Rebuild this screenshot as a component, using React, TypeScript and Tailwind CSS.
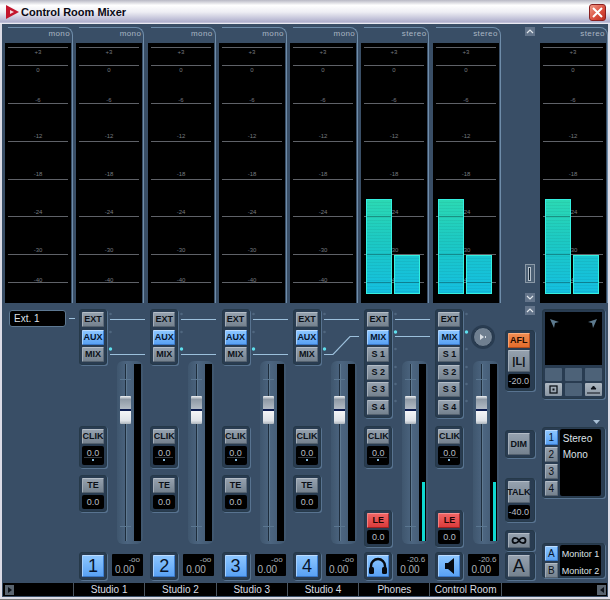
import type { ReactNode } from "react";

const scale = [
  { label: "+3", y: 4, ty: 11 },
  { label: "0", y: 22, ty: 29 },
  { label: "-6", y: 60, ty: 59 },
  { label: "-12", y: 98, ty: 95 },
  { label: "-18", y: 136, ty: 133 },
  { label: "-24", y: 173, ty: 171 },
  { label: "-30", y: 211, ty: 209 },
  { label: "-40", y: 239, ty: 239 },
];

const meters = [
  { kind: "mono" },
  { kind: "mono" },
  { kind: "mono" },
  { kind: "mono" },
  { kind: "mono" },
  { kind: "stereo", bars: true },
  { kind: "stereo", bars: true },
];

function Meter({ bars }: { bars?: boolean }) {
  return (
    <div className="relative h-[260px] w-[66px] bg-black">
      <svg className="absolute inset-0" width="66" height="260">
        {scale.map((s) => (
          <g key={s.label}>
            <line x1="3" x2="63" y1={s.y + 0.5} y2={s.y + 0.5} stroke="#5f6268" />
            <text x="33" y={s.ty} textAnchor="middle" fontSize="6" fill="#777b80" fontFamily="Liberation Sans, sans-serif">
              {s.label}
            </text>
          </g>
        ))}
      </svg>
      {bars && (
        <div className="absolute bottom-[9px] left-[5px] flex items-end gap-[2px]">
          <div className="h-[95px] w-[26px] border border-[#35f0e0] bg-[repeating-linear-gradient(to_bottom,transparent,transparent_2px,rgba(0,0,0,0.05)_2px,rgba(0,0,0,0.05)_3px),linear-gradient(to_bottom,#2bd9b4,#1cc9c4_45%,#14bfe0)]" />
          <div className="h-[39px] w-[26px] border border-[#35f0e0] bg-[repeating-linear-gradient(to_bottom,transparent,transparent_2px,rgba(0,0,0,0.05)_2px,rgba(0,0,0,0.05)_3px),linear-gradient(to_bottom,#18c4d0,#14bfe0)]" />
        </div>
      )}
      {bars && (
        <svg className="absolute inset-0" width="66" height="260">
          <path d="M6 173.5H30M6 211.5H30M6 239.5H30M34 239.5H58" stroke="#000" strokeOpacity="0.3" />
        </svg>
      )}
    </div>
  );
}

function MeterColumn({ kind, bars }: { kind: string; bars?: boolean }) {
  return (
    <div className="w-[68px]">
      <div className="ml-[3px] flex h-[16px] items-start justify-end rounded-tr-[8px] border-t border-r border-[#6f8daa] pt-[1px] pr-[2px] text-[8px] leading-[10px] tracking-[0.4px] text-[#a9b6c3]">
        {kind}
      </div>
      <div className="border-r border-[#6f8daa]">
        <Meter bars={bars} />
      </div>
    </div>
  );
}

function Group({ className = "", children }: { className?: string; children: ReactNode }) {
  return (
    <div className={"flex flex-col rounded-[3px] border border-[#263949] bg-[#293c51] p-[2px] shadow-[1px_1px_0_#587390] " + className}>
      {children}
    </div>
  );
}

const tones = {
  gray: "border-t-[#b4bdc7] border-l-[#a3adb8] border-r-[#5e6b79] border-b-[#55626f] bg-[linear-gradient(to_bottom,#95a1ae,#75828f)] text-[#0c1118]",
  blue: "border-t-[#bcdcff] border-l-[#a5d0ff] border-r-[#3e7fd0] border-b-[#3a78c8] bg-[linear-gradient(to_bottom,#8cc6ff,#5aa2f4)] text-[#06142c]",
  red: "border-t-[#f69090] border-l-[#f08080] border-r-[#a82828] border-b-[#a02020] bg-[linear-gradient(to_bottom,#f06464,#dc3c3c)] text-[#1c0404]",
  orange: "border-t-[#f8b080] border-l-[#f4a070] border-r-[#b85020] border-b-[#b04c1c] bg-[linear-gradient(to_bottom,#f08c50,#e46c2c)] text-[#200a00]",
};

function Btn({
  tone = "gray",
  className = "h-[15px]",
  children,
}: {
  tone?: keyof typeof tones;
  className?: string;
  children: ReactNode;
}) {
  return (
    <div className={"flex w-[22px] shrink-0 items-center justify-center rounded-[1px] border text-[9px] leading-none font-bold " + tones[tone] + " " + className}>
      {children}
    </div>
  );
}

function Readout({ value, dot }: { value: string; dot?: boolean }) {
  return (
    <div className={"relative mt-[2px] w-[22px] rounded-[2px] bg-black text-center text-[9px] text-[#b8bec5] " + (dot ? "h-[19px] leading-[14px]" : "h-[14px] leading-[14px]")}>
      {value}
      {dot && (
        <div className="absolute inset-x-[2px] bottom-[4px] border-t border-[#333a42]">
          <div className="mx-auto mt-[1px] h-[2px] w-[2px] bg-[#7fb4d8]" />
        </div>
      )}
    </div>
  );
}

function Headphones() {
  return (
    <svg width="20" height="18" viewBox="0 0 20 18">
      <path d="M3 12V9a7 7 0 0 1 14 0v3" fill="none" stroke="#060a10" strokeWidth="2.4" />
      <rect x="1" y="10" width="5" height="7" rx="1.5" fill="#060a10" />
      <rect x="14" y="10" width="5" height="7" rx="1.5" fill="#060a10" />
    </svg>
  );
}

function Speaker() {
  return (
    <svg width="12" height="16" viewBox="0 0 12 16">
      <path d="M2 5h3l6-5v16l-6-5H2z" fill="#060a10" />
    </svg>
  );
}

function Fader({ level }: { level?: boolean }) {
  return (
    <div className="relative ml-[10px] flex h-[183px] w-[26px] rounded-[6px] bg-[linear-gradient(to_right,#3f566e,#4c6580_40%,#3f566e)] py-[3px] pl-[3px]">
      <div className="relative w-[11px]">
        <div className="absolute inset-y-0 left-[5px] w-[1px] bg-[#1e2d3c]" />
        <div className="absolute inset-y-0 left-[6px] w-[1px] bg-[#5f7a92]" />
        <div className="absolute inset-x-0 top-[15px] h-[1px] bg-[#5a7690]" />
        <div className="absolute inset-x-0 bottom-[14px] h-[1px] bg-[#5a7690]" />
      </div>
      <div className="relative ml-[3px] w-[7px] bg-black">
        {level && <div className="absolute right-[1px] bottom-0 h-[59px] w-[3px] bg-[#10d8d0]" />}
      </div>
      <div className="absolute top-[35px] left-[3px] h-[28px] w-[11px] rounded-[1px] bg-[linear-gradient(to_bottom,#f2f4f6_0%,#8f9aa6_12%,#b4bdc6_48%,#0c1c50_48%,#0c1c50_54%,#f4f5f7_54%,#dfe3e8_88%,#aeb6be)]" />
    </div>
  );
}

function Big({ top, bottom }: { top: string; bottom: string }) {
  return (
    <div className="mt-[10px] ml-[5px] h-[22px] w-[31px] rounded-[1px] bg-black px-[3px] text-[#aab1b8]">
      <div className="h-[10px] text-right text-[8px] leading-[12px]">{top}</div>
      <div className="text-[10px] leading-[12px]">{bottom}</div>
    </div>
  );
}

const dim = "#4f677f";
const lit = "#5fe0ee";

function Wires({ lines, dots }: { lines: string[]; dots: [number, boolean][] }) {
  return (
    <svg className="absolute top-0 left-0" width="42" height="104">
      {lines.map((d) => (
        <path key={d} d={d} fill="none" stroke="#9cc0dc" strokeWidth="1.2" />
      ))}
      {dots.map(([y, on]) => (
        <circle key={y} cx="3.5" cy={y} r={on ? 1.7 : 1.3} fill={on ? lit : dim} />
      ))}
    </svg>
  );
}

type Strip = {
  name: string;
  id: ReactNode;
  route: { label: string; on?: boolean }[];
  lines: string[];
  dots: [number, boolean][];
  le?: boolean;
  level?: boolean;
  top: string;
  bottom: string;
  round?: boolean;
};

const aux = [{ label: "EXT" }, { label: "AUX", on: true }, { label: "MIX" }];
const sends = [{ label: "EXT" }, { label: "MIX", on: true }, { label: "S 1" }, { label: "S 2" }, { label: "S 3" }, { label: "S 4" }];
const straight = ["M3 16.5H38", "M3 51.5H38"];
const auxDots: [number, boolean][] = [[11, false], [29, false], [46, true]];

const strips: Strip[] = [
  { name: "Studio 1", id: "1", route: aux, lines: straight, dots: auxDots, top: "-oo", bottom: "0.00" },
  { name: "Studio 2", id: "2", route: aux, lines: straight, dots: auxDots, top: "-oo", bottom: "0.00" },
  { name: "Studio 3", id: "3", route: aux, lines: straight, dots: auxDots, top: "-oo", bottom: "0.00" },
  { name: "Studio 4", id: "4", route: aux, lines: ["M3 16.5H38", "M3 51.5H12L29 33.5H38"], dots: auxDots, top: "-oo", bottom: "0.00" },
  {
    name: "Phones",
    id: <Headphones />,
    route: sends,
    lines: ["M3 16.5H38", "M3 33.5H38"],
    dots: [[11, false], [29, true], [46, false], [64, false], [81, false], [98, false]],
    le: true,
    level: true,
    top: "-20.6",
    bottom: "0.00",
  },
  {
    name: "Control Room",
    id: <Speaker />,
    route: sends,
    lines: [],
    dots: [[11, false], [29, true], [46, false], [64, false], [81, false], [98, false]],
    le: true,
    level: true,
    top: "-20.6",
    bottom: "0.00",
    round: true,
  },
];

function ChannelStrip({ strip }: { strip: Strip }) {
  return (
    <div className="flex h-full w-[71.3px] shrink-0">
      <div className="ml-[3px] flex w-[28px] flex-col">
        <div className="h-[123px] pt-[6px]">
          <Group className="gap-[2.5px]">
            {strip.route.map((r) => (
              <Btn key={r.label} tone={r.on ? "blue" : "gray"}>{r.label}</Btn>
            ))}
          </Group>
        </div>
        <Group>
          <Btn>CLIK</Btn>
          <Readout value="0.0" dot />
        </Group>
        {strip.le ? (
          <Group className="mt-[42px]">
            <Btn tone="red">LE</Btn>
            <Readout value="0.0" />
          </Group>
        ) : (
          <Group className="mt-[7px]">
            <Btn>TE</Btn>
            <Readout value="0.0" />
          </Group>
        )}
        <Group className="mt-auto mb-[3px]">
          <Btn tone="blue" className="h-[22px] text-[18px] font-normal">{strip.id}</Btn>
        </Group>
      </div>
      <div className="relative flex w-[40px] flex-col">
        <Wires lines={strip.lines} dots={strip.dots} />
        {strip.round && (
          <div className="absolute top-[24px] left-[10px] flex h-[20px] w-[20px] items-center justify-center rounded-full border border-[#24364a] bg-[#6f7f90] shadow-[0_0_0_2px_#293c51]">
            <svg width="8" height="8" viewBox="0 0 8 8"><path d="M1 1l4 3-4 3z" fill="#d8dee4" /><rect x="6" y="3" width="1" height="2" fill="#d8dee4" /></svg>
          </div>
        )}
        <div className="mt-[58px]">
          <Fader level={strip.level} />
        </div>
        <Big top={strip.top} bottom={strip.bottom} />
      </div>
    </div>
  );
}

function Arrow({ up }: { up?: boolean }) {
  return (
    <div className="flex h-[9px] w-[10px] items-center justify-center bg-[#63748a]">
      <svg width="8" height="5" viewBox="0 0 8 5">
        <path d={up ? "M1 4l3-3 3 3" : "M1 1l3 3 3-3"} fill="none" stroke="#dfe5ea" strokeWidth="1.2" />
      </svg>
    </div>
  );
}

function PanButton({ on, children }: { on?: boolean; children?: ReactNode }) {
  return (
    <div className={"flex h-[13px] items-center justify-center rounded-[1px] " + (on ? "bg-[linear-gradient(to_bottom,#aeb8c2,#8a97a4)]" : "bg-[#4d6278]")}>
      {children}
    </div>
  );
}

function Pick({ on, children }: { on?: boolean; children: ReactNode }) {
  return (
    <Btn tone={on ? "blue" : "gray"} className="h-[15px] !w-[13px] text-[10px] font-normal">
      {children}
    </Btn>
  );
}

function RightPanels() {
  return (
    <div className="flex h-full">
      <div className="ml-[1px] flex w-[30px] flex-col">
        <div className="mt-[3px] flex h-[9px] justify-end">
          <Arrow up />
        </div>
        <Group className="mt-[15px]">
          <Btn tone="orange">AFL</Btn>
          <Btn className="mt-[2px] h-[22px] text-[11px]">|L|</Btn>
          <Readout value="-20.0" />
        </Group>
        <Group className="mt-[39px]">
          <Btn className="h-[22px]">DIM</Btn>
        </Group>
        <Group className="mt-[20px]">
          <Btn className="h-[22px] text-[8px]">TALK</Btn>
          <Readout value="-40.0" />
        </Group>
        <Group className="mt-[8px]">
          <Btn>
            <svg width="16" height="9" viewBox="0 0 16 9">
              <path d="M8 4.5C6 1 1.5 1 1.5 4.5S6 8 8 4.5 14.5 1 14.5 4.5 10 8 8 4.5z" fill="none" stroke="#080c12" strokeWidth="1.8" />
            </svg>
          </Btn>
        </Group>
        <Group className="mt-auto mb-[3px]">
          <Btn className="h-[22px] text-[18px] font-normal">A</Btn>
        </Group>
      </div>
      <div className="ml-[7px] flex w-[63px] flex-col">
        <div className="mt-[6px] flex flex-col rounded-[3px] border border-[#263949] bg-[#293c51] p-[2px] shadow-[1px_1px_0_#587390]">
          <div className="flex h-[53px] items-start justify-between bg-black px-[5px] pt-[7px]">
            <svg width="9" height="9" viewBox="0 0 9 9"><path d="M0 0l9 3-4 1-1 5z" fill="#5d7a8e" /></svg>
            <svg width="9" height="9" viewBox="0 0 9 9"><path d="M9 0L0 3l4 1 1 5z" fill="#5d7a8e" /></svg>
          </div>
          <div className="mt-[3px] grid grid-cols-3 gap-x-[3px] gap-y-[2px]">
            <PanButton />
            <PanButton />
            <PanButton />
            <PanButton on>
              <svg width="9" height="9" viewBox="0 0 9 9"><rect x="1" y="1" width="7" height="7" fill="none" stroke="#0c1118" strokeWidth="1.3" /><rect x="3.5" y="3.5" width="2" height="2" fill="#0c1118" /></svg>
            </PanButton>
            <PanButton />
            <PanButton on>
              <svg width="13" height="9" viewBox="0 0 13 9"><path d="M0 8h13M6.5 1L4 4h5z" stroke="#0c1118" fill="#0c1118" /></svg>
            </PanButton>
          </div>
        </div>
        <div className="mt-[21px] flex h-[5px] justify-end pr-[5px]">
          <svg width="7" height="4" viewBox="0 0 7 4"><path d="M0 0h7L3.5 4z" fill="#a9c0d6" /></svg>
        </div>
        <div className="mt-[2px] flex h-[71px] gap-[2px] rounded-[3px] border border-[#263949] bg-[#293c51] py-[1px] pr-[3px] pl-[2px] shadow-[1px_1px_0_#587390]">
          <div className="flex flex-col gap-[2px] pt-[1px]">
            <Pick on>1</Pick>
            <Pick>2</Pick>
            <Pick>3</Pick>
            <Pick>4</Pick>
          </div>
          <div className="flex-1 rounded-[2px] bg-black pt-[2px] pl-[3px] text-[10px] leading-[16px] text-[#dde2e7]">
            <div>Stereo</div>
            <div>Mono</div>
          </div>
        </div>
        <div className="mt-[45px] flex h-[35px] gap-[2px] rounded-[3px] border border-[#263949] bg-[#293c51] py-[1px] pr-[3px] pl-[2px] shadow-[1px_1px_0_#587390]">
          <div className="flex flex-col gap-[2px] pt-[1px]">
            <Pick on>A</Pick>
            <Pick>B</Pick>
          </div>
          <div className="flex-1 rounded-[2px] bg-black pt-[1px] pl-[2px] text-[9px] leading-[17px] whitespace-nowrap text-[#dde2e7]">
            <div>Monitor 1</div>
            <div>Monitor 2</div>
          </div>
        </div>
      </div>
    </div>
  );
}

function TitleBar() {
  return (
    <div className="flex h-[24px] shrink-0 items-center bg-[linear-gradient(to_bottom,#b8b8c4,#ffffff_22%,#eeeef4_50%,#aeaecc_92%,#ffffff)] pr-[4px] pl-[6px]">
      <svg width="13" height="14" viewBox="0 0 13 14">
        <path d="M0 0l13 7-13 7z" fill="#c3142c" />
        <path d="M4 5l4 2-4 2z" fill="#f4d8dc" />
      </svg>
      <div className="ml-[2px] text-[11px] font-bold text-[#0a0a14]">Control Room Mixer</div>
      <div className="ml-auto flex h-[17px] w-[17px] items-center justify-center rounded-[3px] border border-[#8a2020] bg-[linear-gradient(135deg,#f09a88,#d84c3c_60%,#b82c20)]">
        <svg width="11" height="11" viewBox="0 0 11 11">
          <path d="M1 1l9 9M10 1l-9 9" stroke="#fff" strokeWidth="2" />
        </svg>
      </div>
    </div>
  );
}

function BottomBar() {
  return (
    <div className="mx-[1px] flex h-[13px] shrink-0 bg-black text-center text-[10px] leading-[13px] text-[#d8dde2]">
      <div className="flex w-[70px] items-center pl-[2px]">
        <div className="flex h-[10px] w-[9px] items-center justify-center bg-[#59646f]">
          <svg width="4" height="6" viewBox="0 0 4 6"><path d="M0 0l4 3-4 3z" fill="#0c1118" /></svg>
        </div>
      </div>
      {strips.map((s) => (
        <div key={s.name} className="w-[71.3px] shrink-0 border-l border-[#4a5560]">{s.name}</div>
      ))}
      <div className="flex flex-1 items-center justify-end border-l border-[#4a5560] pr-[1px]">
        <div className="flex h-[10px] w-[9px] items-center justify-center bg-[#59646f]">
          <svg width="4" height="6" viewBox="0 0 4 6"><path d="M4 0L0 3l4 3z" fill="#0c1118" /></svg>
        </div>
      </div>
    </div>
  );
}

export default function App() {
  return (
    <div className="flex h-[600px] w-[610px] flex-col overflow-hidden bg-[#dcdce6] font-['Liberation_Sans',sans-serif]">
      <TitleBar />
      <div className="mx-[2px] flex flex-1 flex-col bg-[#394e66]">
        <div className="flex h-[279px] shrink-0 pt-[3px] pl-[3px]">
          {meters.map((m, i) => (
            <div key={i} className="w-[71.3px] shrink-0">
              <MeterColumn kind={m.kind} bars={m.bars} />
            </div>
          ))}
          <div className="flex w-[35.9px] shrink-0 flex-col items-end pr-[5px]">
            <Arrow up />
            <div className="mt-auto flex h-[19px] w-[10px] items-center justify-center border border-[#8a98a6] bg-[#4b5f74]">
              <div className="h-[14px] w-[3px] border border-[#b8c2cc] bg-[#10202e]" />
            </div>
            <div className="mt-[10px] mb-[1px]">
              <Arrow />
            </div>
          </div>
          <MeterColumn kind="stereo" bars />
        </div>
        <div className="flex h-[280px] shrink-0">
          <div className="w-[74px] shrink-0 pt-[7px] pl-[7px]">
            <div className="flex items-center">
              <div className="h-[17px] w-[57px] rounded-[3px] border border-[#5d7892] bg-black pl-[4px] text-[10px] leading-[15px] text-[#dde2e7]">Ext. 1</div>
              <div className="ml-[3px] h-[1px] w-[6px] bg-[#9cc0dc]" />
            </div>
          </div>
          {strips.map((s) => (
            <ChannelStrip key={s.name} strip={s} />
          ))}
          <RightPanels />
        </div>
        <BottomBar />
      </div>
      <div className="h-[3px] shrink-0 border-b border-[#777]" />
    </div>
  );
}
